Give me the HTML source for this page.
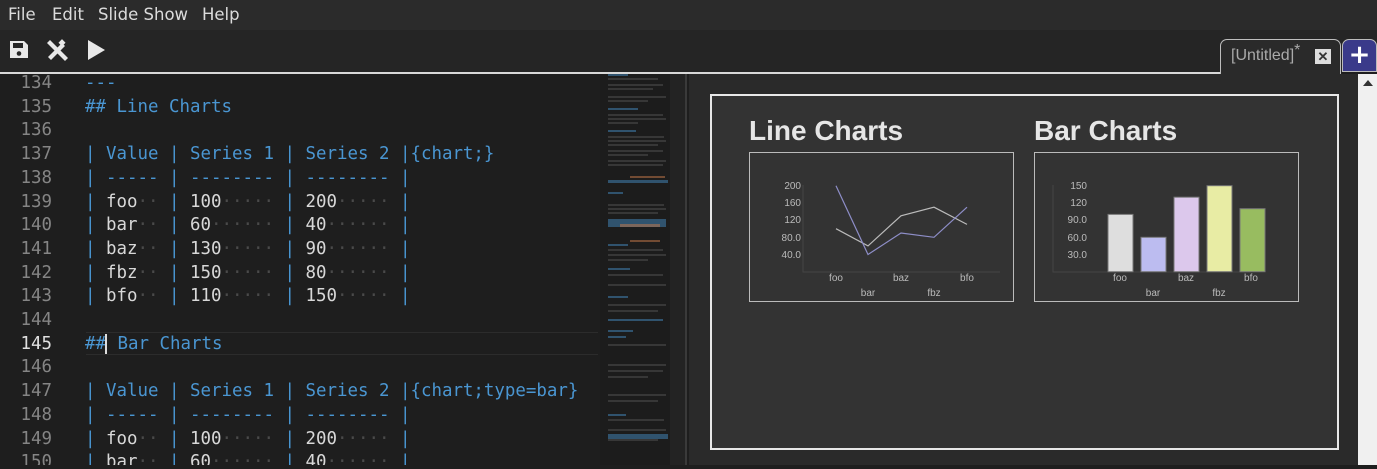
<!DOCTYPE html>
<html><head><meta charset="utf-8"><style>
*{margin:0;padding:0;box-sizing:border-box}
body{width:1377px;height:465px;overflow:hidden;background:#1e1e1e;position:relative;font-family:"DejaVu Sans","Liberation Sans",sans-serif}
#menu{position:absolute;left:0;top:0;width:1377px;height:30px;background:#2b2b2b;color:#dcdcdc;font-size:16.5px}
#menu span{position:absolute;top:5px}
#tool{position:absolute;left:0;top:30px;width:1377px;height:42px;background:#252525}
#line{position:absolute;left:0;top:72px;width:1220px;height:2px;background:#d8d8d8}
#ed{position:absolute;left:0;top:74px;width:600px;height:391px;background:#1e1e1e;overflow:hidden}
.code{position:absolute;left:0;top:-2px;font-family:"DejaVu Sans Mono","Liberation Mono",monospace;font-size:17.45px;line-height:23.7px;white-space:pre}
.ln{display:inline-block;width:52px;text-align:right;color:#858585;margin-right:33px}
.b{color:#4a96d2}.t{color:#d8d8d8}.d{color:#4a4a4a}
#cur{position:absolute;left:86px;top:258px;width:512px;height:23px;border-top:1px solid #2c2c2c;border-bottom:1px solid #2c2c2c}
#mini{position:absolute;left:600px;top:74px;width:70px;height:391px;background:#1c1c1c}
#gut{position:absolute;left:670px;top:74px;width:17px;height:391px;background:#232323;border-right:2px solid #3a3a3a}
#prev{position:absolute;left:689px;top:74px;width:669px;height:391px;background:#2a2a2a}
#slide{position:absolute;left:710px;top:94px;width:629px;height:356px;border:2px solid #e8e8e8;background:#333}
#sb{position:absolute;left:1358px;top:74px;width:19px;height:391px;background:#f0f0f0}
h2{position:absolute;font-family:"Liberation Sans",sans-serif;font-weight:bold;font-size:28px;color:#e6e6e6;top:115px}
</style></head><body>
<div id="menu"><span style="left:8px">File</span><span style="left:52px">Edit</span><span style="left:98px">Slide Show</span><span style="left:202px">Help</span></div>
<div id="tool">
<svg width="130" height="42" style="position:absolute;left:0;top:0">
<path d="M10 11h14l4 4v13H10z" fill="#e8e8e8"/><rect x="13" y="13" width="10" height="5" fill="#252525"/><circle cx="19" cy="23.5" r="2.3" fill="#252525"/>
<g fill="#e8e8e8"><path d="M47 13l3-3 18 18-3 3z"/><path d="M47 28l14-14 3 3-14 14z" transform="translate(1,-1)"/><rect x="60" y="10" width="5" height="5" transform="rotate(45 62 12)"/></g>
<path d="M88 10l17 10-17 10z" fill="#e8e8e8"/>
</svg>
<div style="position:absolute;left:1220px;top:9px;width:121px;height:35px;background:#2a2a2a;border:1px solid #bdbdbd;border-bottom:none;border-radius:7px 7px 0 0;color:#aaa;font-family:'Liberation Sans',sans-serif;font-size:16px;padding:7px 0 0 10px">[Untitled]<span style="font-size:16px;position:relative;top:-5px">*</span><span style="position:absolute;left:94px;top:9px;width:16px;height:15px;background:#ddd;color:#333;font-size:13px;font-weight:bold;text-align:center;line-height:15px">✕</span></div>
<div style="position:absolute;left:1342px;top:9px;width:35px;height:33px;background:#3a3a8a;border:1px solid #bbb;border-radius:7px 7px 0 0;color:#fff;font-size:26px;font-weight:bold;text-align:center;line-height:30px">+</div>
</div>
<div id="line"></div>
<div id="ed">
<div id="cur"></div>
<div class="code"><span class="ln">134</span><span class="b">---</span>
<span class="ln">135</span><span class="b">## Line Charts</span>
<span class="ln">136</span>
<span class="ln">137</span><span class="b">| Value | Series 1 | Series 2 |{chart;}</span>
<span class="ln">138</span><span class="b">| ----- | -------- | -------- |</span>
<span class="ln">139</span><span class="b">| </span><span class="t">foo</span><span class="d">··</span><span class="b"> | </span><span class="t">100</span><span class="d">·····</span><span class="b"> | </span><span class="t">200</span><span class="d">·····</span><span class="b"> |</span>
<span class="ln">140</span><span class="b">| </span><span class="t">bar</span><span class="d">··</span><span class="b"> | </span><span class="t">60</span><span class="d">······</span><span class="b"> | </span><span class="t">40</span><span class="d">······</span><span class="b"> |</span>
<span class="ln">141</span><span class="b">| </span><span class="t">baz</span><span class="d">··</span><span class="b"> | </span><span class="t">130</span><span class="d">·····</span><span class="b"> | </span><span class="t">90</span><span class="d">······</span><span class="b"> |</span>
<span class="ln">142</span><span class="b">| </span><span class="t">fbz</span><span class="d">··</span><span class="b"> | </span><span class="t">150</span><span class="d">·····</span><span class="b"> | </span><span class="t">80</span><span class="d">······</span><span class="b"> |</span>
<span class="ln">143</span><span class="b">| </span><span class="t">bfo</span><span class="d">··</span><span class="b"> | </span><span class="t">110</span><span class="d">·····</span><span class="b"> | </span><span class="t">150</span><span class="d">·····</span><span class="b"> |</span>
<span class="ln">144</span>
<span class="ln" style="color:#e0e0e0">145</span><span class="b">##</span><span style="border-left:2px solid #ddd;margin-left:-1px"></span><span class="b"> Bar Charts</span>
<span class="ln">146</span>
<span class="ln">147</span><span class="b">| Value | Series 1 | Series 2 |{chart;type=bar}</span>
<span class="ln">148</span><span class="b">| ----- | -------- | -------- |</span>
<span class="ln">149</span><span class="b">| </span><span class="t">foo</span><span class="d">··</span><span class="b"> | </span><span class="t">100</span><span class="d">·····</span><span class="b"> | </span><span class="t">200</span><span class="d">·····</span><span class="b"> |</span>
<span class="ln">150</span><span class="b">| </span><span class="t">bar</span><span class="d">··</span><span class="b"> | </span><span class="t">60</span><span class="d">······</span><span class="b"> | </span><span class="t">40</span><span class="d">······</span><span class="b"> |</span></div>
</div>
<div id="mini">
<svg width="70" height="391">
<g fill="#777" opacity="0.3">
<rect x="8" y="4" width="50" height="2"/><rect x="8" y="10" width="55" height="2"/><rect x="8" y="14" width="45" height="2"/><rect x="8" y="22" width="58" height="2"/><rect x="8" y="26" width="40" height="2"/>
<rect x="8" y="40" width="55" height="2"/><rect x="8" y="44" width="58" height="2"/><rect x="8" y="48" width="30" height="2"/>
<rect x="8" y="62" width="56" height="2"/><rect x="8" y="66" width="58" height="2"/><rect x="8" y="70" width="50" height="2"/><rect x="8" y="76" width="55" height="2"/><rect x="8" y="80" width="40" height="2"/><rect x="8" y="86" width="58" height="2"/><rect x="8" y="90" width="55" height="2"/>
<rect x="8" y="130" width="56" height="2"/><rect x="8" y="134" width="58" height="2"/><rect x="8" y="138" width="50" height="2"/>
<rect x="8" y="175" width="55" height="2"/><rect x="8" y="180" width="58" height="2"/><rect x="8" y="185" width="40" height="2"/>
<rect x="8" y="200" width="55" height="2"/><rect x="8" y="210" width="58" height="2"/><rect x="8" y="230" width="58" height="2"/><rect x="8" y="236" width="50" height="2"/>
<rect x="8" y="270" width="58" height="2"/><rect x="8" y="290" width="58" height="2"/><rect x="8" y="296" width="55" height="2"/><rect x="8" y="302" width="40" height="2"/><rect x="8" y="320" width="58" height="2"/><rect x="8" y="326" width="50" height="2"/><rect x="8" y="345" width="56" height="2"/><rect x="8" y="355" width="58" height="2"/><rect x="8" y="365" width="50" height="2"/>
</g>
<g fill="#4a96d2" opacity="0.45"><rect x="8" y="0" width="20" height="2"/><rect x="8" y="34" width="30" height="2"/><rect x="8" y="56" width="28" height="2"/><rect x="8" y="106" width="60" height="3"/><rect x="8" y="118" width="15" height="2"/><rect x="8" y="145" width="58" height="8"/><rect x="8" y="170" width="20" height="2"/><rect x="8" y="194" width="22" height="2"/><rect x="8" y="222" width="20" height="2"/><rect x="8" y="245" width="55" height="2"/><rect x="8" y="256" width="25" height="2"/><rect x="8" y="262" width="18" height="2"/><rect x="8" y="340" width="18" height="2"/><rect x="8" y="360" width="60" height="5"/></g>
<g fill="#c87a4a" opacity="0.5"><rect x="30" y="102" width="35" height="2"/><rect x="20" y="150" width="40" height="3"/><rect x="30" y="166" width="30" height="2"/></g>
</svg></div>
<div id="gut"></div>
<div id="prev"></div>
<div id="slide"></div>
<div id="sb"><div style="position:absolute;left:5px;top:6px;width:0;height:0;border-left:5px solid transparent;border-right:5px solid transparent;border-bottom:6px solid #333"></div></div>
<h2 style="left:749px">Line Charts</h2>
<h2 style="left:1034px">Bar Charts</h2>
<svg width="1377" height="465" style="position:absolute;left:0;top:0" font-family="Liberation Sans,sans-serif" font-size="10" fill="#bbb">
<rect x="749.5" y="152.5" width="264" height="149" fill="none" stroke="#bbb"/>
<rect x="1034.5" y="152.5" width="264" height="149" fill="none" stroke="#bbb"/>
<path d="M803 185v87h197" stroke="#444" fill="none"/>
<g text-anchor="end"><text x="801" y="189">200</text><text x="801" y="206">160</text><text x="801" y="223">120</text><text x="801" y="241">80.0</text><text x="801" y="258">40.0</text></g>
<g text-anchor="middle"><text x="836" y="281">foo</text><text x="901" y="281">baz</text><text x="967" y="281">bfo</text><text x="868" y="296">bar</text><text x="934" y="296">fbz</text></g>
<polyline points="836,228.7 868,245.9 901,215.8 934,207.2 967,224.4" fill="none" stroke="#bbb" stroke-width="1.2"/>
<polyline points="836,185.7 868,254.5 901,233 934,237.3 967,207.2" fill="none" stroke="#8e8ec8" stroke-width="1.2"/>
<path d="M1053 185v87h197" stroke="#444" fill="none"/>
<g text-anchor="end"><text x="1087" y="189">150</text><text x="1087" y="206">120</text><text x="1087" y="223">90.0</text><text x="1087" y="241">60.0</text><text x="1087" y="258">30.0</text></g>
<g text-anchor="middle"><text x="1120" y="281">foo</text><text x="1186" y="281">baz</text><text x="1251" y="281">bfo</text><text x="1153" y="296">bar</text><text x="1219" y="296">fbz</text></g>
<g stroke="#777"><rect x="1108" y="214.4" width="25" height="57.3" fill="#dedede"/><rect x="1141" y="237.3" width="25" height="34.4" fill="#bcbcf0"/><rect x="1174" y="197.2" width="25" height="74.5" fill="#dcc8ec"/><rect x="1207" y="185.7" width="25" height="86" fill="#e8eca4"/><rect x="1240" y="208.7" width="25" height="63" fill="#98bc60"/></g>
</svg>
</body></html>
